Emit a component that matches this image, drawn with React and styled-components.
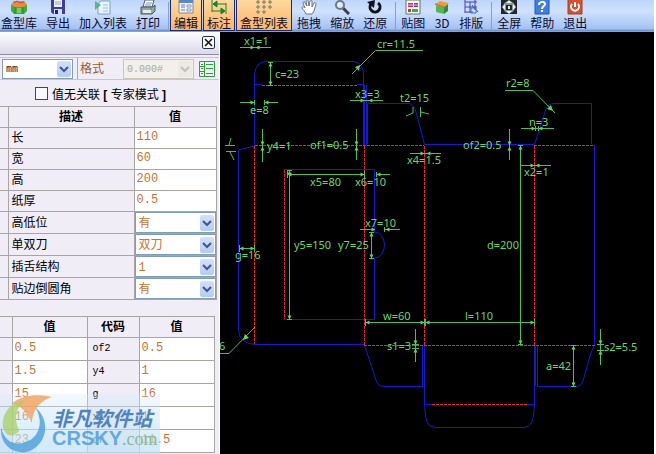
import React from "react";
import styled, { createGlobalStyle, css } from "styled-components";

const Global = createGlobalStyle`
  * { box-sizing: border-box; }
  body {
    margin: 0;
    background: #fff;
    font-family: "Liberation Sans", "Noto Sans CJK SC", sans-serif;
    font-size: 12px;
    color: #000;
  }
`;

const Page = styled.div`
  display: flex;
  flex-direction: column;
  min-height: 100vh;
  padding-right: 2px;
  overflow: hidden;
`;

/* ---------- toolbar ---------- */

const Toolbar = styled.nav`
  display: flex;
  align-items: flex-end;
  gap: 1px;
  height: 32px;
  margin-left: -3px;
  padding-bottom: 1px;
  overflow: hidden;
  background: linear-gradient(#bdd6fb 0, #cfe1fd 35%, #a3c2f2 90%, #6c94dc 95%, #86aae8 100%);
`;

const ToolButton = styled.button`
  display: flex;
  flex-direction: column;
  align-items: center;
  justify-content: flex-end;
  flex: none;
  height: 33px;
  min-width: 24px;
  padding: 0 3px;
  border: 1px solid transparent;
  background: none;
  color: #0a0a28;
  font: 12px/15px "Noto Sans CJK SC", sans-serif;
  white-space: nowrap;
  ${(p) =>
    p.$active &&
    css`
      border-color: #1a2a78;
      background: linear-gradient(#fdd9a0, #fcb766);
    `}
`;

const ToolIcon = styled.svg`
  display: block;
  flex: none;
  width: 16px;
  height: 16px;
`;

const Separator = styled.span`
  flex: none;
  width: 1px;
  height: 29px;
  margin-left: 3px;
  background: #7fa2dc;
`;

const icons = {
  box: (
    <>
      <path d="M0 6l3-4h10l3 4v6l-3 3H3l-3-3z" fill="#3fae3b" />
      <path d="M0 6l3-4h10l3 4-4 2H4z" fill="#ef8a3a" />
      <path d="M3 4l3-2 3 2 4-1" stroke="#c8442c" fill="none" />
      <path d="M4 8v7M12 8v7" stroke="#238a2c" />
      <path d="M6 9h4v5H6z" fill="#6fd05c" />
    </>
  ),
  save: (
    <>
      <path d="M1 1h14v14H3l-2-2z" fill="#3d3f9c" />
      <path d="M4 1h8v7H4z" fill="#eef1fb" />
      <path d="M5 3h6M5 5h6" stroke="#9aa5d4" />
      <path d="M4 10h8v5H4z" fill="#d8dcf0" />
      <path d="M5 11h3v4H5z" fill="#24266c" />
    </>
  ),
  list: (
    <>
      <path d="M5 2h10v13H3V6z" fill="#e6f4fb" stroke="#7ba6bd" />
      <path d="M8 6h5M8 9h5M8 12h5" stroke="#93c4d6" />
      <path d="M0 2l6 4-6 5z" fill="#58b48c" />
    </>
  ),
  print: (
    <>
      <path d="M5 1h9l-2 7H3z" fill="#fff" stroke="#555b66" />
      <path d="M6 4h6M5 6h6" stroke="#5b9ddb" />
      <path d="M1 8h12l2-2v6l-3 3H1z" fill="#9ba5a8" stroke="#4b5359" />
      <path d="M3 11h8v3H3z" fill="#e3ece6" />
      <path d="M10 10h2" stroke="#3aa24a" />
    </>
  ),
  form: (
    <>
      <path d="M1 1h14v13H1z" fill="#f1f3f8" stroke="#7d8ba3" />
      <path d="M1 1h14v3H1z" fill="#5b86c7" />
      <path d="M3 6h4M3 8h4M3 11h4" stroke="#5c7dab" />
      <path d="M9 6h4v2H9zM9 10h4v2H9z" fill="#fff" stroke="#7f99c0" />
    </>
  ),
  dims: (
    <g fill="#16832b" stroke="#16832b">
      <path d="M1 1v12M15 4v11M2 5h13M1 12h13" fill="none" />
      <path d="M2 5l4-3v6zM14 12l-4-3v6z" />
    </g>
  ),
  grid: (
    <g fill="#f5eddc" stroke="#77705f">
      <path d="M1 2h2v2H1zM7 2h2v2H7zM13 2h2v2h-2zM1 7h2v2H1zM7 7h2v2H7zM13 7h2v2h-2zM1 12h2v2H1zM7 12h2v2H7z" />
    </g>
  ),
  hand: (
    <path
      d="M5 15c-1-3-3-4-4-6 0-2 2-1 3 0L2 4c0-2 2-2 2 0l2 3-1-5c1-2 2-1 2 0l1 5 1-5c1-1 2-1 2 1v5l2-4c1-1 2 0 2 1l-2 7-2 3z"
      fill="#fff"
      stroke="#6d7480"
    />
  ),
  zoom: (
    <>
      <path d="M9 9l6 6" stroke="#3c3f48" strokeWidth="3" />
      <circle cx="6" cy="6" r="4" fill="#dcecfb" stroke="#6d7888" strokeWidth="2" />
      <path d="M4 5l2-1" stroke="#fff" />
    </>
  ),
  restore: (
    <>
      <path d="M11 4a5 5 0 1 1-7 1" fill="none" stroke="#111318" strokeWidth="3" />
      <path d="M0 3l8-2-1 8z" fill="#111318" />
    </>
  ),
  image: (
    <>
      <path d="M1 1h14v14H1z" fill="#f7f7f2" stroke="#5b7b6b" />
      <path d="M3 4h5v4H3z" fill="#d22a6c" />
      <path d="M9 4h4v4H9z" fill="#7a3a9c" />
      <path d="M3 10h3v3H3z" fill="#c93434" />
      <path d="M7 10h6v3H7z" fill="#3fa85a" />
      <path d="M3 6h10" stroke="#f3c4da" />
    </>
  ),
  cube: (
    <>
      <path d="M2 6l8 2v7l-8-2z" fill="#54b84c" />
      <path d="M10 8l4-3v7l-4 3z" fill="#2c8f35" />
      <path d="M1 5l5-3 9 2-5 4z" fill="#f09a3a" />
      <path d="M1 5l9 3" stroke="#c46a1c" />
    </>
  ),
  layout: (
    <g fill="none" stroke="#4a3fb4">
      <path d="M2 1v13M2 3h12M7 3v11M2 8h12M12 1v10M2 13h8M9 6l6 7" />
      <path d="M8 9h5v5H8z" stroke="#3b6fd0" />
    </g>
  ),
  full: (
    <>
      <path d="M0 0h16v15H0z" fill="#23282c" />
      <circle cx="8" cy="8" r="6" fill="#8d989b" />
      <path d="M8 1l3 3H5zM8 15l3-3H5zM1 8l3-3v6zM15 8l-3-3v6z" fill="#e9f0ee" />
      <path d="M5 6h6v5H5z" fill="#23282c" />
      <path d="M7 7h2v3H7z" fill="#dfe6e4" />
    </>
  ),
  help: (
    <>
      <path d="M1 0h14v15H1z" fill="#3f7fe4" stroke="#2556b4" />
      <path d="M5 6c0-4 6-4 6-1 0 2-3 2-3 5M8 11v2" fill="none" stroke="#fff" strokeWidth="2" />
    </>
  ),
  exit: (
    <>
      <path d="M1 0h14v15H1z" fill="#d9502e" stroke="#a83a22" />
      <path d="M5 5a4 4 0 1 0 6 0M8 3v5" fill="none" stroke="#fff" strokeWidth="2" />
    </>
  ),
};

const tools = [
  [["盒型库", "box"], ["导出", "save"], ["加入列表", "list"], ["打印", "print"]],
  [
    ["编辑", "form", true],
    ["标注", "dims", true],
    ["盒型列表", "grid", true],
    ["拖拽", "hand"],
    ["缩放", "zoom"],
    ["还原", "restore"],
  ],
  [["贴图", "image"], ["3D", "cube"], ["排版", "layout"]],
  [["全屏", "full"], ["帮助", "help"], ["退出", "exit"]],
];

/* ---------- side panel ---------- */

const Workspace = styled.main`
  display: flex;
  flex: 1;
`;

const Panel = styled.aside`
  position: relative;
  flex: none;
  width: 220px;
  background: #f0edf7;
  border-right: 1px solid #fff;
`;

const PanelHeader = styled.header`
  display: flex;
  align-items: center;
  justify-content: flex-end;
  height: 23px;
  padding: 0 4px 2px;
  border-bottom: 1px solid #8f8ba4;
  background: linear-gradient(#fdfdff, #dcd9e8);
`;

const CloseButton = styled.button`
  display: grid;
  place-items: center;
  width: 13px;
  height: 13px;
  padding: 0;
  border: 1px solid #23324a;
  border-radius: 2px;
  background: #fafaff;
`;

const UnitRow = styled.div`
  display: flex;
  align-items: center;
  height: 23px;
  margin-top: 2px;
  padding-left: 2px;
  border-top: 1px solid #c8c5cc;
  border-bottom: 1px solid #c8c5cc;
`;

const FormatLabel = styled.label`
  height: 21px;
  margin-left: 4px;
  padding-left: 2px;
  width: 46px;
  border-left: 1px solid #aaa6a4;
  color: #9a5a34;
  line-height: 22px;
`;

const SelectWrap = styled.span`
  display: grid;
  grid-template-columns: 1fr 15px;
  align-items: center;
  width: ${(p) => p.$width || "100%"};
  height: ${(p) => (p.$width ? "20px" : "21px")};
  border: 1px solid ${(p) => (p.$disabled ? "#c9c7ba" : "#7f9db9")};
  background: ${(p) => (p.$disabled ? "#f2f0e8" : "#fff")};
`;

const Select = styled.select`
  grid-area: 1 / 1 / 2 / 3;
  width: 100%;
  height: 18px;
  padding: 2px 16px 0 3px;
  border: 0;
  appearance: none;
  background: none;
  color: ${(p) => (p.$plain ? "#111" : "#c4762f")};
  font: ${(p) => (p.$plain ? "10px" : "12px")} / 16px "Liberation Mono", "Noto Sans CJK SC", monospace;
  opacity: 1;
  &:disabled { color: #aaa798; }
`;

const Arrow = styled.svg`
  grid-area: 1 / 2 / 2 / 3;
  width: 14px;
  height: 16px;
  pointer-events: none;
  border-radius: 2px;
  background: ${(p) => (p.$disabled ? "#ebe9e0" : "linear-gradient(#d3e0fd, #b4caf8)")};
`;

const IconButton = styled.button`
  display: block;
  width: 18px;
  height: 18px;
  margin-left: 4px;
  padding: 0;
  border: 0;
  background: none;
`;

const LinkRow = styled.label`
  display: flex;
  align-items: center;
  justify-content: center;
  gap: 4px;
  height: 26px;
  padding-right: 18px;
`;

const Check = styled.input`
  width: 13px;
  height: 13px;
  margin: 0;
  border: 1px solid #1d5280;
  background: #f8f8fc;
  appearance: none;
`;

const Tables = styled.div`
  display: grid;
  gap: 16px;
`;

const Table = styled.table`
  width: ${(p) => p.$width};
  border-collapse: collapse;
  table-layout: fixed;
`;

const Row = styled.tr`
  height: ${(p) => p.$height};
`;

const cell = css`
  padding: 0;
  border: 1px solid #a9a5a3;
  &:first-child { border-left: 0; }
`;

const Head = styled.th`
  ${cell}
  font-weight: 700;
  line-height: 16px;
`;

const Name = styled.td`
  ${cell}
  padding-left: 3px;
  line-height: 16px;
`;

const Code = styled(Name)`
  padding-left: 5px;
  font: 10px/16px "Liberation Mono", monospace;
`;

const Field = styled.td`
  ${cell}
  background: #fff;
`;

const Value = styled.input`
  display: block;
  width: 100%;
  height: ${(p) => p.$height};
  padding: 0 2px 2px;
  border: 0;
  background: none;
  color: #c4762f;
  font: 12px/16px "Liberation Mono", monospace;
`;

function Dropdown({ id, label, value, width, disabled, plain }) {
  return (
    <SelectWrap $width={width} $disabled={disabled}>
      <Select id={id} aria-label={label} disabled={disabled} $plain={plain} defaultValue={value}>
        <option>{value}</option>
      </Select>
      <Arrow viewBox="0 0 14 16" $disabled={disabled}>
        <path
          d="M3 6l4 4 4-4"
          fill="none"
          stroke={disabled ? "#c3c0b4" : "#3f5887"}
          strokeWidth="2"
        />
      </Arrow>
    </SelectWrap>
  );
}

const sizes = [["长", "110"], ["宽", "60"], ["高", "200"], ["纸厚", "0.5"]];
const options = [["高低位", "有"], ["单双刀", "双刀"], ["插舌结构", "1"], ["贴边倒圆角", "有"]];
const codes = [
  ["0.5", "of2", "0.5"],
  ["1.5", "y4", "1"],
  ["15", "g", "16"],
  ["16", "x1", "1"],
  ["23", "cr", "11.5"],
];

/* ---------- watermark ---------- */

const Watermark = styled.div`
  position: absolute;
  left: 0;
  bottom: 0;
  display: flex;
  align-items: center;
  width: 160px;
  height: 60px;
  pointer-events: none;
  background: linear-gradient(rgba(214, 236, 250, 0.3), rgba(190, 224, 246, 0.75));
`;

const Swirl = styled.svg`
  flex: none;
  width: 52px;
  height: 60px;
`;

const Brand = styled.div`
  padding-top: 8px;
  white-space: nowrap;
`;

const BrandName = styled.div`
  color: #4f83c2;
  font: italic 700 20px/20px "Noto Sans CJK SC", sans-serif;
`;

const BrandSite = styled.div`
  color: #62a9dc;
  font: 700 20px/20px "Liberation Sans", sans-serif;
`;

const Suffix = styled.span`
  color: #8ab796;
  font: 400 18px/20px "Liberation Serif", serif;
`;

/* ---------- die-line drawing ---------- */

const Canvas = styled.section`
  flex: 1;
  min-width: 0;
  background: #000;
`;

const Drawing = styled.svg`
  display: block;
  width: 100%;
  height: auto;
`;

const Cut = styled.path`
  fill: none;
  stroke: #1818d2;
`;

const Crease = styled.path`
  fill: none;
  stroke: #dc2c3a;
  stroke-dasharray: 3 1;
`;

const DimLine = styled.path`
  fill: none;
  stroke: #4fbf52;
`;

const Tip = styled.path`
  fill: #62d465;
`;

const DimText = styled.text`
  fill: #66d869;
  font: 11px "Noto Sans", sans-serif;
`;

const cuts = [
  "M254.500 146L238.500 150V330Q239 343 254.500 344.500H364.500",
  "M254.500 146V74Q256 62 266 61.500H354Q363 63 363.500 74V145",
  "M255 84.500h7M357 84.500h7",
  "M364.500 85V145M366.500 85V145M367.500 144V103.500H409Q414 104 416 112L424.500 144.500H534.500L546 109Q548 103.500 554 103.500H591.500V144",
  "M594.500 145V345Q591 352 590 356L583 381Q581 386.500 576 386.500H537.500V345",
  "M284 169.500H374.500V232A10 13 0 0 1 374.500 258V319.500H284",
  "M364.500 345L376 380Q378 386.500 384 386.500H422.500V345",
  "M424.500 345V404L425.500 416Q427 427.500 436 427.500H525Q532 426 533.500 416L534.500 404V345M535.500 345V386M424 404.500h8M527 404.500h8",
];
const creases = [
  "M262 85.500H357M255 145.500H424M534 145.500H594M364 345.500H595M432 404.500H527",
  "M254.500 146V344M284.500 170V319M364.500 146V345M424.500 146V345M534.500 146V345",
];
const leaders = [
  "M352 74L375.500 50.500H423",
  "M555 113L533 90.500H505",
  "M255 327L229 353.500H220",
  "M240 47.500H271M350 100.500H383M240 102.500H254M264 102.500H278M254.500 100v5M264.500 100v5",
  "M410 153.500H441M360 229.500H375M385 229.500H400M376 174.500H390M384.500 227v5M376.500 172v5",
  "M521 128.500H554M521 165.500H551M535.500 126v5M538.500 126v5",
  "M262.500 129V162M356.500 129V160M509.500 129V160M415.500 329V362M600.500 329V365",
  "M597 344.500h7M597 350.500h7M412 344.500h7M412 348.500h7",
  "M225 145.500H235M226 151.500H236M231 138l-2 7M230 152l4 8",
  "M406 116l7-3v-6M420.500 107v10M421 112l8 2",
];

const horizontal = [[287, 364, 174], [239, 254, 248], [365, 424, 322], [425, 534, 322]];
const vertical = [[270, 62, 85], [289, 170, 319], [371, 232, 258], [520, 145, 344], [573, 345, 386]];

/* [x, y, direction] of free-standing arrow heads */
const tips = [
  [254, 47, "r"], [255, 47, "l"], [364, 100, "r"], [368, 100, "l"],
  [254, 102, "r"], [264, 102, "l"], [424, 153, "r"], [426, 153, "l"],
  [375, 229, "r"], [385, 229, "l"], [376, 174, "l"], [535, 128, "r"],
  [538, 128, "l"], [534, 165, "r"], [535, 165, "l"],
  [262, 145, "d"], [262, 146, "u"], [356, 145, "d"], [356, 146, "u"],
  [509, 145, "d"], [509, 146, "u"], [415, 344, "d"], [415, 348, "u"],
  [600, 344, "d"], [600, 350, "u"],
];

const labels = [
  ["x1=1", 244, 45], ["c=23", 275, 78], ["cr=11.5", 377, 48], ["x3=3", 355, 98],
  ["e=8", 250, 114], ["t2=15", 400, 102], ["y4=1", 267, 150], ["of1=0.5", 310, 149],
  ["x4=1.5", 407, 164], ["x5=80", 310, 186], ["x6=10", 355, 186], ["y5=150", 294, 249],
  ["y7=25", 338, 249], ["x7=10", 365, 227], ["g=16", 235, 259], ["w=60", 383, 320],
  ["l=110", 465, 320], ["s1=3", 387, 350], ["d=200", 487, 249], ["a=42", 546, 370],
  ["s2=5.5", 604, 351], ["of2=0.5", 463, 149], ["r2=8", 506, 87], ["n=3", 529, 126],
  ["x2=1", 524, 176], ["6", 219, 350],
];

const heads = {
  r: "l-4 -2v4z",
  l: "l4 -2v4z",
  d: "l-2 -4h4z",
  u: "l-2 4h4z",
};

function ArrowHead({ x, y, dir }) {
  return <Tip d={`M${x + 0.5} ${y + 0.5}${heads[dir]}`} />;
}

function DieLine() {
  return (
    <Drawing viewBox="220 32 434 422" role="img" aria-label="盒型展开图">
      {cuts.map((d) => <Cut key={d} d={d} />)}
      {creases.map((d) => <Crease key={d} d={d} />)}
      {leaders.map((d) => <DimLine key={d} d={d} />)}
      {horizontal.map(([a, b, y]) => (
        <g key={a}>
          <DimLine d={`M${a} ${y + 0.5}H${b}M${a + 0.5} ${y - 3}v7M${b + 0.5} ${y - 3}v7`} />
          <ArrowHead x={a} y={y} dir="l" />
          <ArrowHead x={b} y={y} dir="r" />
        </g>
      ))}
      {vertical.map(([x, a, b]) => (
        <g key={x}>
          <DimLine d={`M${x + 0.5} ${a}V${b}M${x - 2} ${a + 0.5}h5M${x - 2} ${b + 0.5}h5`} />
          <ArrowHead x={x} y={a} dir="u" />
          <ArrowHead x={x} y={b} dir="d" />
        </g>
      ))}
      {tips.map(([x, y, dir]) => <ArrowHead key={`${x}-${y}-${dir}`} x={x} y={y} dir={dir} />)}
      <Tip d="M360 65l-1 6-4-4zM553 111l-6-2 4-4zM243 340l2-6 4 4z" />
      {labels.map(([t, x, y]) => <DimText key={t} x={x} y={y}>{t}</DimText>)}
    </Drawing>
  );
}

export default function App() {
  return (
    <Page>
      <Global />
      <Toolbar>
        {tools.map((group, i) => (
          <React.Fragment key={i}>
            {i > 0 && <Separator />}
            {group.map(([label, icon, active]) => (
              <ToolButton key={label} type="button" $active={active}>
                <ToolIcon viewBox="0 0 16 16">{icons[icon]}</ToolIcon>
                {label}
              </ToolButton>
            ))}
          </React.Fragment>
        ))}
      </Toolbar>
      <Workspace>
        <Panel>
          <PanelHeader>
            <CloseButton type="button" aria-label="关闭">
              <svg width="9" height="9" viewBox="0 0 9 9">
                <path d="M1 1l7 7M8 1l-7 7" stroke="#111" strokeWidth="1.5" />
              </svg>
            </CloseButton>
          </PanelHeader>
          <UnitRow>
            <Dropdown label="单位" value="mm" width="71px" plain />
            <FormatLabel htmlFor="format">格式</FormatLabel>
            <Dropdown id="format" value="0.000#" width="71px" disabled plain />
            <IconButton type="button" aria-label="列表">
              <svg width="18" height="18" viewBox="0 0 18 18" fill="none" stroke="#2f9e3c">
                <path d="M1.500 1.500h15v15h-15zM6.500 1v16M3 4.500h2M3 8.500h2M3 13.500h2M8 4.500h7M8 8.500h7M8 13.500h7" />
                <path d="M2 6.500h4M2 11.500h4" />
              </svg>
            </IconButton>
          </UnitRow>
          <LinkRow>
            <Check type="checkbox" />
            <span>值无关联<b> [ </b>专家模式<b> ]</b></span>
          </LinkRow>
          <Tables>
            <Table $width="216px">
              <colgroup>
                <col width="8" />
                <col width="126" />
                <col width="82" />
              </colgroup>
              <thead>
                <Row $height="21px">
                  <Head />
                  <Head>描述</Head>
                  <Head>值</Head>
                </Row>
              </thead>
              <tbody>
                {sizes.map(([name, value]) => (
                  <Row key={name} $height="21px">
                    <Name />
                    <Name>{name}</Name>
                    <Field><Value $height="20px" aria-label={name} defaultValue={value} /></Field>
                  </Row>
                ))}
                {options.map(([name, value]) => (
                  <Row key={name} $height="22px">
                    <Name />
                    <Name>{name}</Name>
                    <Field><Dropdown label={name} value={value} /></Field>
                  </Row>
                ))}
              </tbody>
            </Table>
            <Table $width="214px">
              <colgroup>
                <col width="12" />
                <col width="75" />
                <col width="52" />
                <col width="75" />
              </colgroup>
              <thead>
                <Row $height="21px">
                  <Head />
                  <Head>值</Head>
                  <Head>代码</Head>
                  <Head>值</Head>
                </Row>
              </thead>
              <tbody>
                {codes.map(([left, code, right]) => (
                  <Row key={code} $height="23px">
                    <Name />
                    <Field><Value $height="20px" aria-label={`${code} 前值`} defaultValue={left} /></Field>
                    <Code>{code}</Code>
                    <Field><Value $height="20px" aria-label={code} defaultValue={right} /></Field>
                  </Row>
                ))}
              </tbody>
            </Table>
          </Tables>
          <Watermark>
            <Swirl viewBox="0 0 54 62">
              <path d="M12 10C24 0 40 0 54 3C44 6 34 14 33 30C28 18 22 12 12 10Z" fill="#f2a05a" opacity=".8" />
              <path d="M3 34C2 18 12 8 26 7C16 14 14 26 20 38C14 46 6 44 3 34Z" fill="#a8cf62" opacity=".75" />
              <path d="M1 34C4 48 14 54 26 50C40 46 46 30 37 14C54 28 48 54 28 60C12 62 0 52 1 34Z" fill="#4a9fdc" opacity=".8" />
            </Swirl>
            <Brand>
              <BrandName>非凡软件站</BrandName>
              <BrandSite>CRSKY<Suffix>.com</Suffix></BrandSite>
            </Brand>
          </Watermark>
        </Panel>
        <Canvas>
          <DieLine />
        </Canvas>
      </Workspace>
    </Page>
  );
}
